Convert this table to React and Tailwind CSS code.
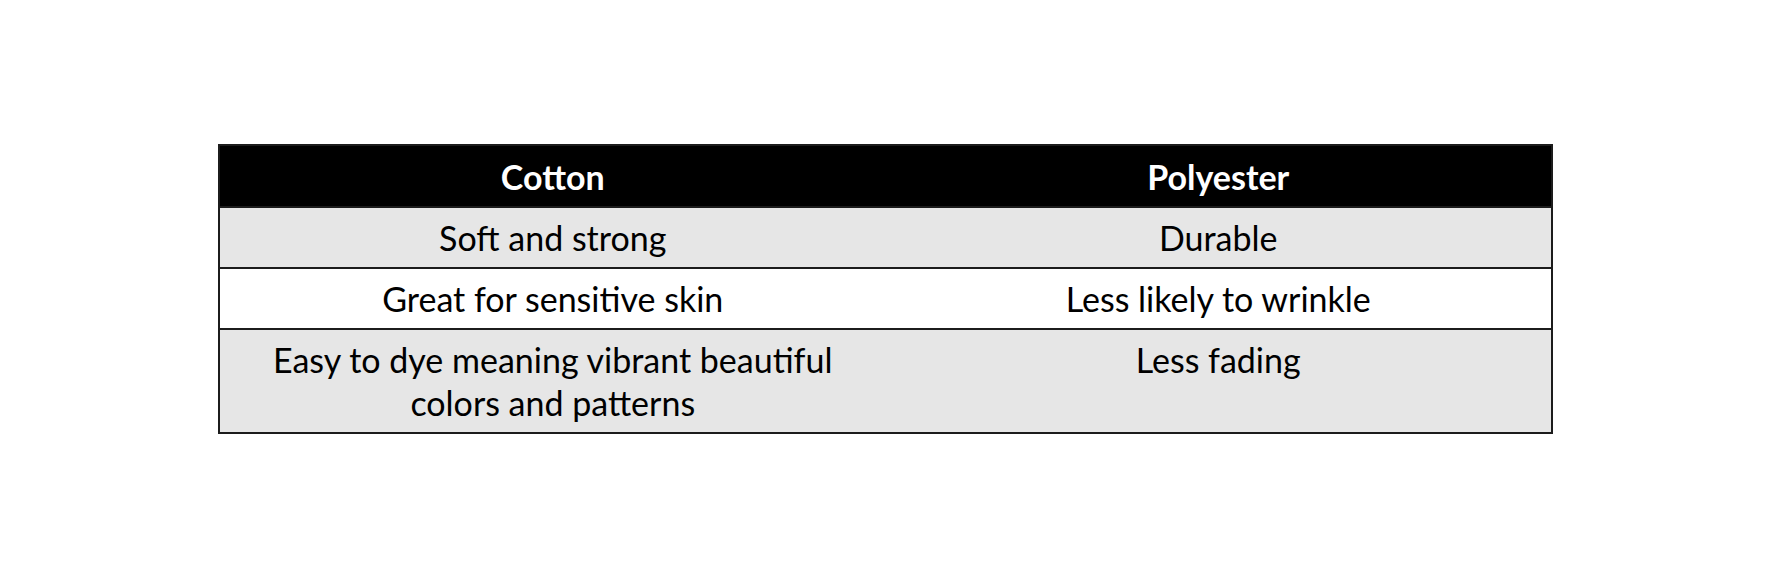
import React from 'react';

const rows = [
  { cotton: 'Soft and strong', poly: 'Durable', shade: true },
  { cotton: 'Great for sensitive skin', poly: 'Less likely to wrinkle', shade: false },
  { cotton: ['Easy to dye meaning vibrant beautiful', 'colors and patterns'], poly: 'Less fading', shade: true },
];

const App = () => {
  return (
    <div className="w-[1767px] h-[575px] bg-white pt-[144px] pl-[218px]" style={{ fontFamily: 'Lato, "Open Sans", sans-serif' }}>
      <table className="w-[1335px] border-collapse border-2 border-[#1c1c1c] table-fixed text-black text-[34px]">
        <thead>
          <tr className="bg-black text-white h-[62px]">
            <th className="font-bold text-center align-middle leading-[43px]">Cotton</th>
            <th className="font-bold text-center align-middle leading-[43px]">Polyester</th>
          </tr>
        </thead>
        <tbody>
          {rows.map((r, i) => (
            <tr key={i} className={`${r.shade ? 'bg-[#e6e6e6]' : 'bg-white'} border-t-2 border-[#1c1c1c]`}>
              <td className="text-center align-top py-[8px] leading-[43px]">
                {Array.isArray(r.cotton) ? r.cotton.map((l) => <div key={l}>{l}</div>) : r.cotton}
              </td>
              <td className="text-center align-top py-[8px] leading-[43px]">{r.poly}</td>
            </tr>
          ))}
        </tbody>
      </table>
    </div>
  );
};

export default App;
